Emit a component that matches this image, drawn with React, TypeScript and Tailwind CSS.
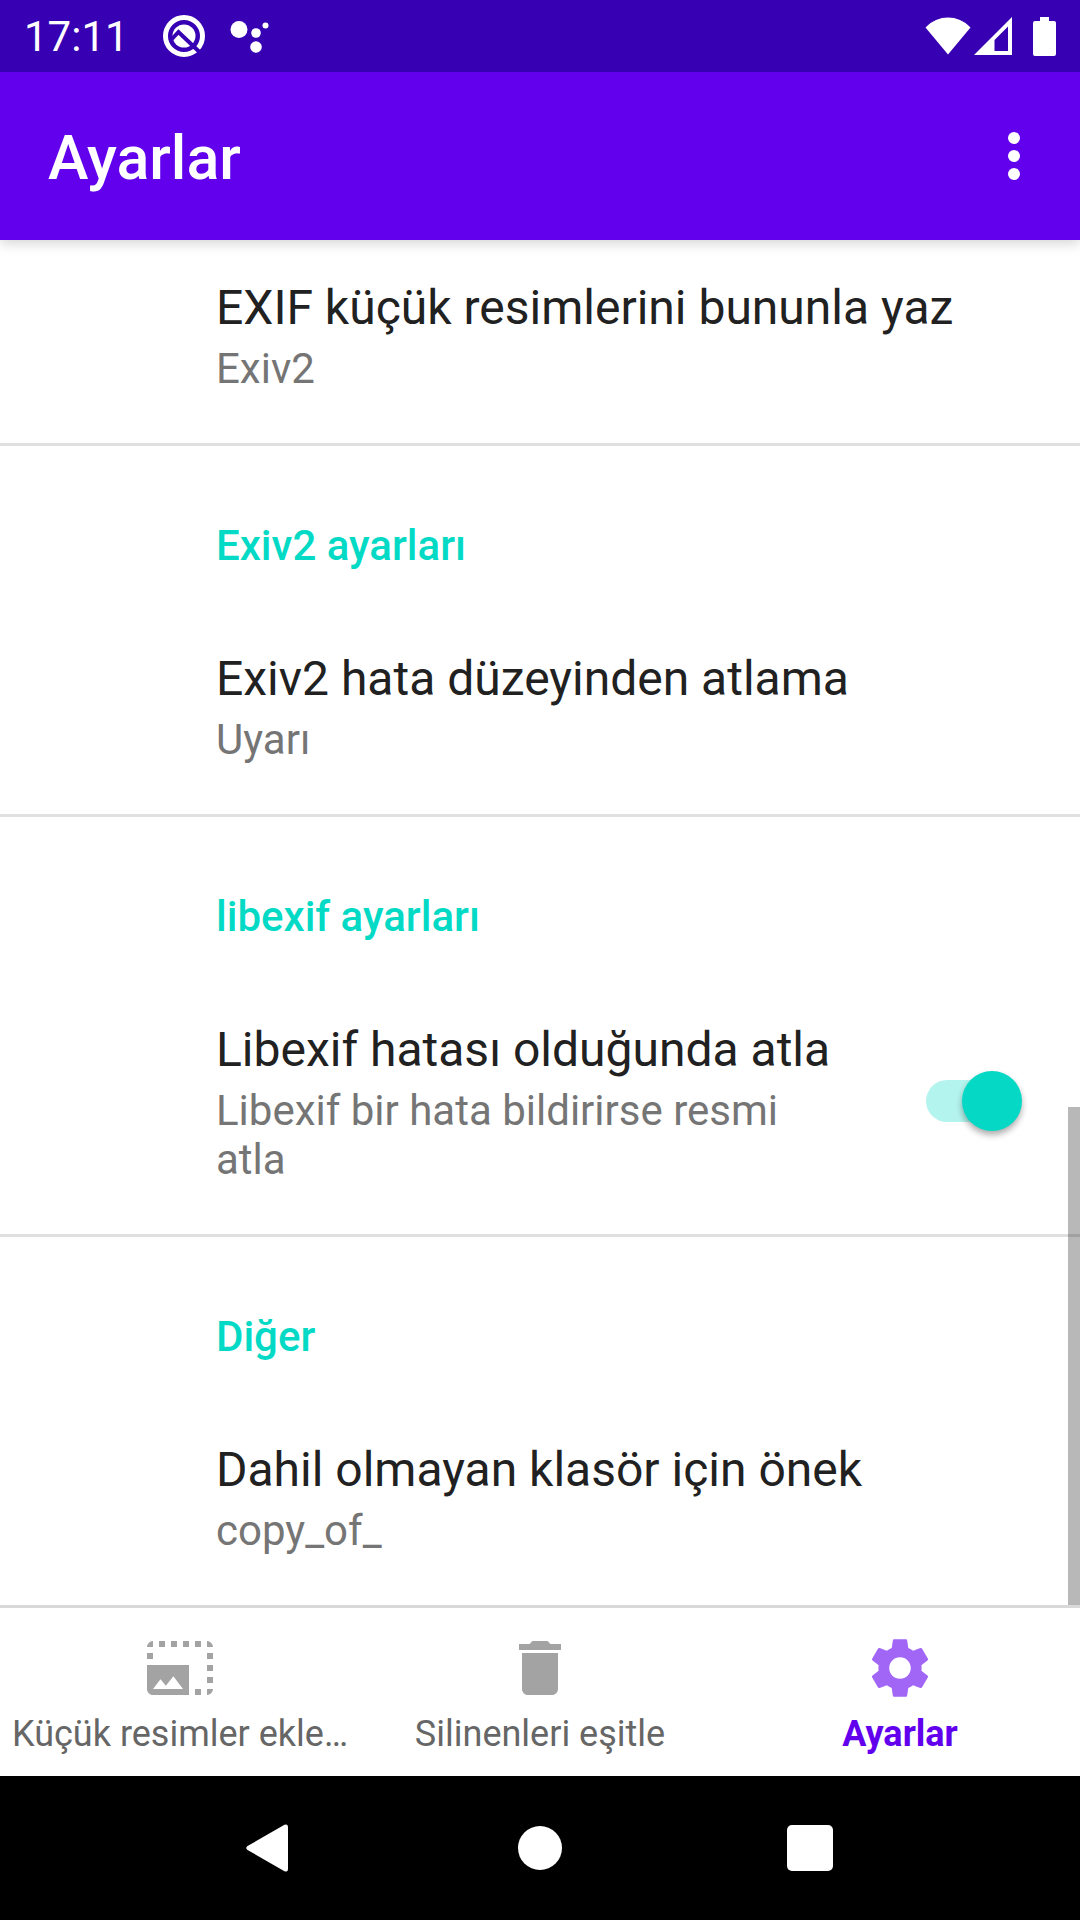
import { useState, type ReactNode } from "react";

function StatusBar() {
  return (
    <div className="z-20 flex h-[72px] shrink-0 items-center justify-between bg-[#3700b3] px-6 text-white">
      <div className="flex items-center">
        <span className="pt-[2px] text-[42px] leading-[50px]">17:11</span>
        <svg className="ml-[33px] h-[44px] w-[44px]" viewBox="0 0 44 44" aria-hidden="true">
          <circle cx="22" cy="22" r="18.5" fill="none" stroke="#fff" strokeWidth="5" />
          <circle cx="22" cy="22" r="11.5" fill="#fff" />
          <path d="M8 27 L16.5 18 L38 38.5" fill="none" stroke="#3700b3" strokeWidth="4" />
        </svg>
        <svg className="ml-6 h-[36px] w-[40px]" viewBox="0 0 40 36" fill="#fff" aria-hidden="true">
          <circle cx="9" cy="11.5" r="8.5" />
          <circle cx="26" cy="15" r="4.8" />
          <circle cx="26" cy="29" r="5.8" />
          <circle cx="35.5" cy="7.5" r="3" />
        </svg>
      </div>
      <div className="flex items-center">
        <svg className="h-[38px] w-[46px]" viewBox="0 0 46 38" fill="#fff" aria-hidden="true">
          <path d="M23 37.5 L0.5 10.5 C13 -2.8 33 -2.8 45.5 10.5 Z" />
        </svg>
        <svg className="ml-[3px] h-[38px] w-[38px]" viewBox="0 0 38 38" fill="#fff" aria-hidden="true">
          <path fillRule="evenodd" d="M38 0 V38 H0 Z M34 9.5 L20.5 23 V34 H34 Z" />
        </svg>
        <svg className="ml-[21px] h-[39px] w-[23px]" viewBox="0 0 23 39" fill="#fff" aria-hidden="true">
          <path d="M7 0 H16 V4 H21 Q23 4 23 6 V37 Q23 39 21 39 H2 Q0 39 0 37 V6 Q0 4 2 4 H7 Z" />
        </svg>
      </div>
    </div>
  );
}

function AppBar() {
  return (
    <header className="z-10 flex h-[168px] shrink-0 items-center justify-between bg-[#6200ee] pl-12 pr-[30px] text-white shadow-[0_3px_12px_rgba(0,0,0,0.18)]">
      <h1 className="pt-1 text-[61px] font-medium leading-[72px]">Ayarlar</h1>
      <button type="button" aria-label="Diğer seçenekler">
        <svg className="h-[72px] w-[72px]" viewBox="0 0 24 24" fill="currentColor">
          <circle cx="12" cy="6" r="2" />
          <circle cx="12" cy="12" r="2" />
          <circle cx="12" cy="18" r="2" />
        </svg>
      </button>
    </header>
  );
}

function Section({ title, children }: { title: string; children: ReactNode }) {
  return (
    <section className="border-t-[3px] border-[#e0e0e0] pt-[76px]">
      <h2 className="mb-[29px] pl-[216px] text-[42px] font-medium leading-[48px] text-[#03dac6]">{title}</h2>
      {children}
    </section>
  );
}

function Texts({ title, summary }: { title: string; summary: string }) {
  return (
    <span className="flex min-w-0 flex-1 flex-col gap-1">
      <span className="text-[48px] leading-[64px] text-[#212121]">{title}</span>
      <span className="text-[42px] leading-[49px] text-[#757575]">{summary}</span>
    </span>
  );
}

function Preference({ title, summary }: { title: string; summary: string }) {
  return (
    <button type="button" className="flex w-full pb-[50px] pl-[216px] pr-12 pt-12 text-left">
      <Texts title={title} summary={summary} />
    </button>
  );
}

function SwitchPreference({ title, summary }: { title: string; summary: string }) {
  const [on, setOn] = useState(true);
  return (
    <label className="flex w-full items-center gap-[72px] pb-[50px] pl-[216px] pr-16 pt-12">
      <Texts title={title} summary={summary} />
      <input
        type="checkbox"
        role="switch"
        checked={on}
        onChange={(e) => setOn(e.target.checked)}
        className="relative h-[42px] w-[90px] shrink-0 appearance-none rounded-full bg-[#bdbdbd] before:absolute before:-left-1 before:-top-[9px] before:h-[60px] before:w-[60px] before:rounded-full before:bg-[#fafafa] before:shadow-[0_4px_6px_rgba(0,0,0,0.32)] checked:bg-[#b4f4ee] checked:before:left-[36px] checked:before:bg-[#05d8c4]"
      />
    </label>
  );
}

function Tab({ label, active, children }: { label: string; active?: boolean; children: ReactNode }) {
  return (
    <a
      href="#"
      aria-current={active ? "page" : undefined}
      className={
        active
          ? "flex min-w-0 flex-1 flex-col items-center pt-6 font-bold text-[#6200ee]"
          : "flex min-w-0 flex-1 flex-col items-center pt-6 text-[#666666]"
      }
    >
      <svg
        className={active ? "h-[72px] w-[72px] text-[#a166f5]" : "h-[72px] w-[72px] text-[#a3a3a3]"}
        viewBox="0 0 24 24"
        fill="currentColor"
        aria-hidden="true"
      >
        {children}
      </svg>
      <span className="mt-[10px] max-w-full whitespace-nowrap text-[36px] leading-[40px]">{label}</span>
    </a>
  );
}

function BottomTabs() {
  return (
    <nav className="flex h-[171px] shrink-0 border-t-[3px] border-[#d9d9d9] bg-white">
      <Tab label="Küçük resimler ekle…">
        <path d="M21 15h2v2h-2v-2zm0-4h2v2h-2v-2zm2 8h-2v2c1 0 2-1 2-2zM13 3h2v2h-2V3zm8 4h2v2h-2V7zm0-4v2h2c0-1-1-2-2-2zM1 7h2v2H1V7zm16-4h2v2h-2V3zm0 16h2v2h-2v-2zM3 3C2 3 1 4 1 5h2V3zm6 0h2v2H9V3zM5 3h2v2H5V3zm-4 8v8c0 1.1.9 2 2 2h12V11H1zm2 8l2.5-3.21 1.79 2.15 2.5-3.22L13 19H3z" />
      </Tab>
      <Tab label="Silinenleri eşitle">
        <path d="M6 19c0 1.1.9 2 2 2h8c1.1 0 2-.9 2-2V7H6v12zM19 4h-3.5l-1-1h-5l-1 1H5v2h14V4z" />
      </Tab>
      <Tab label="Ayarlar" active>
        <path d="M19.14 12.94c.04-.3.06-.61.06-.94 0-.32-.02-.64-.07-.94l2.03-1.58c.18-.14.23-.41.12-.61l-1.92-3.32c-.12-.22-.37-.29-.59-.22l-2.39.96c-.5-.38-1.03-.7-1.62-.94l-.36-2.54c-.04-.24-.24-.41-.48-.41h-3.84c-.24 0-.43.17-.47.41l-.36 2.54c-.59.24-1.13.57-1.62.94l-2.39-.96c-.22-.08-.47 0-.59.22L2.74 8.87c-.12.21-.08.47.12.61l2.03 1.58c-.05.3-.09.63-.09.94s.02.64.07.94l-2.03 1.58c-.18.14-.23.41-.12.61l1.92 3.32c.12.22.37.29.59.22l2.39-.96c.5.38 1.03.7 1.62.94l.36 2.54c.05.24.24.41.48.41h3.84c.24 0 .44-.17.47-.41l.36-2.54c.59-.24 1.13-.56 1.62-.94l2.39.96c.22.08.47 0 .59-.22l1.92-3.32c.12-.22.07-.47-.12-.61l-2.01-1.58zM12 15.6c-1.98 0-3.6-1.62-3.6-3.6s1.62-3.6 3.6-3.6 3.6 1.62 3.6 3.6-1.62 3.6-3.6 3.6z" />
      </Tab>
    </nav>
  );
}

function SystemNav() {
  return (
    <div className="flex h-36 shrink-0 items-center justify-center bg-black">
      <button type="button" aria-label="Geri" className="flex w-1/4 justify-center">
        <svg className="h-12 w-12" viewBox="0 0 48 48" fill="#fff">
          <path d="M1.5 22 L38.5 0.8 Q42 -0.5 42 3 V45 Q42 48.5 38.5 47.2 L1.5 26 Q-1 24 1.5 22 Z" />
        </svg>
      </button>
      <button type="button" aria-label="Ana ekran" className="flex w-1/4 justify-center">
        <span className="h-11 w-11 rounded-full bg-white" />
      </button>
      <button type="button" aria-label="Son uygulamalar" className="flex w-1/4 justify-center">
        <span className="h-[46px] w-[46px] rounded-[5px] bg-white" />
      </button>
    </div>
  );
}

export default function App() {
  return (
    <div className="flex min-h-screen flex-col bg-white font-['Roboto',sans-serif]">
      <StatusBar />
      <AppBar />
      <main className="relative flex-1">
        <div className="-mt-3">
          <Preference title="EXIF küçük resimlerini bununla yaz" summary="Exiv2" />
        </div>
        <Section title="Exiv2 ayarları">
          <Preference title="Exiv2 hata düzeyinden atlama" summary="Uyarı" />
        </Section>
        <Section title="libexif ayarları">
          <SwitchPreference title="Libexif hatası olduğunda atla" summary="Libexif bir hata bildirirse resmi atla" />
        </Section>
        <Section title="Diğer">
          <Preference title="Dahil olmayan klasör için önek" summary="copy_of_" />
        </Section>
        <div className="absolute bottom-0 right-0 h-[498px] w-3 bg-black/28" />
      </main>
      <BottomTabs />
      <SystemNav />
    </div>
  );
}
